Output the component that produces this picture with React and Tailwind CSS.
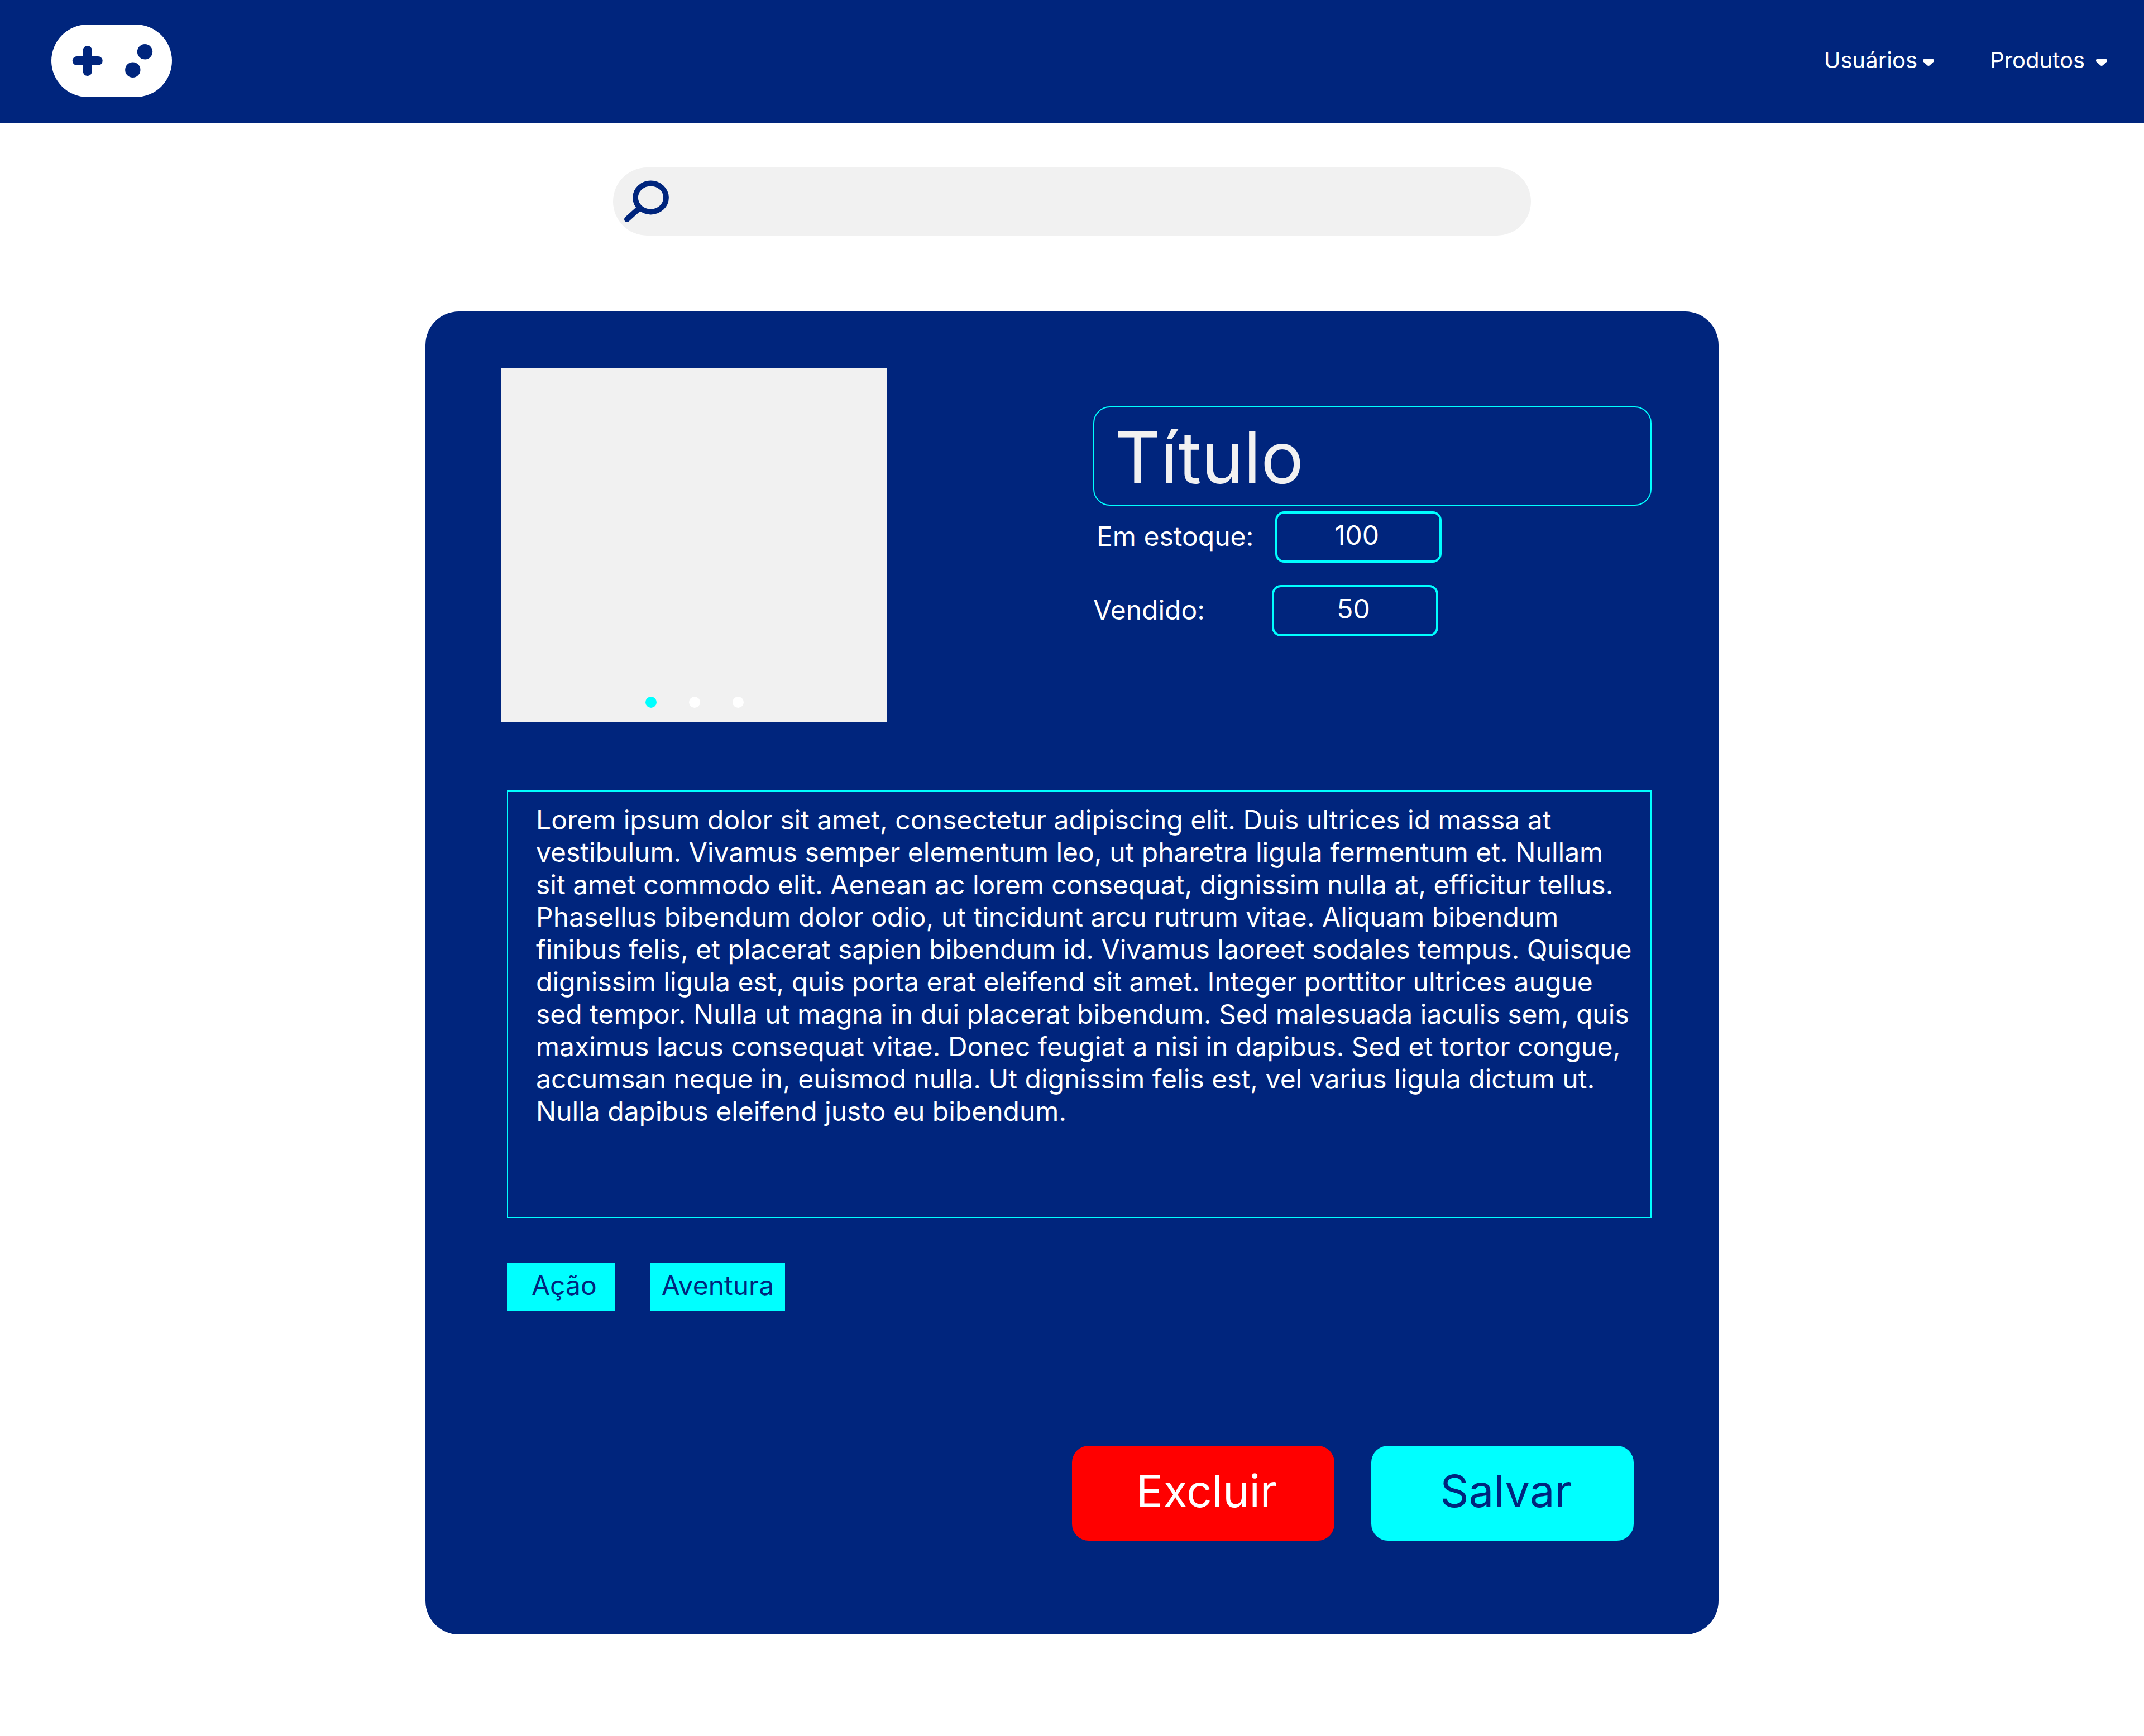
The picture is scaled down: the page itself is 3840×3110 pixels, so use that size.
const description =
  'Lorem ipsum dolor sit amet, consectetur adipiscing elit. Duis ultrices id massa at vestibulum. Vivamus semper elementum leo, ut pharetra ligula fermentum et. Nullam sit amet commodo elit. Aenean ac lorem consequat, dignissim nulla at, efficitur tellus. Phasellus bibendum dolor odio, ut tincidunt arcu rutrum vitae. Aliquam bibendum finibus felis, et placerat sapien bibendum id. Vivamus laoreet sodales tempus. Quisque dignissim ligula est, quis porta erat eleifend sit amet. Integer porttitor ultrices augue sed tempor. Nulla ut magna in dui placerat bibendum. Sed malesuada iaculis sem, quis maximus lacus consequat vitae. Donec feugiat a nisi in dapibus. Sed et tortor congue, accumsan neque in, euismod nulla. Ut dignissim felis est, vel varius ligula dictum ut. Nulla dapibus eleifend justo eu bibendum.';

function Logo() {
  return (
    <svg className="h-[130px] w-[216px]" viewBox="0 0 216 130" aria-hidden="true">
      <rect width="216" height="130" rx="65" fill="#fff" />
      <path d="M64.7 46v38M45.700 65h38" stroke="#00257D" strokeWidth="16" strokeLinecap="round" />
      <circle cx="167.500" cy="48.700" r="13.700" fill="#00257D" />
      <circle cx="145.800" cy="81.300" r="13.700" fill="#00257D" />
    </svg>
  );
}

function Caret() {
  return (
    <svg className="mt-2 h-3 w-5" viewBox="0 0 20 12" aria-hidden="true">
      <path
        d="M1.800 0H18.200C19.200 0 20 .8 20 1.800V3c0 .5-.2 1-.6 1.400L12.400 11c-1.400 1.300-3.400 1.300-4.800 0L.6 4.400C.2 4 0 3.500 0 3V1.800C0 .8.8 0 1.800 0Z"
        fill="#fff"
      />
    </svg>
  );
}

function SearchIcon() {
  return (
    <svg className="h-[76px] w-20 shrink-0" viewBox="0 0 80 76" fill="none" stroke="#00257D" aria-hidden="true">
      <ellipse cx="47.500" cy="31" rx="27.500" ry="25.500" strokeWidth="9.800" />
      <path d="M27.500 49.500L5 69.800" strokeWidth="10" strokeLinecap="round" />
    </svg>
  );
}

function Quantity({ id, label, value, className }) {
  return (
    <div className={`flex items-center ${className}`}>
      <label htmlFor={id} className="w-[320px] pb-0.5">
        {label}
      </label>
      <input
        id={id}
        defaultValue={value}
        inputMode="numeric"
        className="h-[92px] w-[298px] rounded-2xl border-4 border-[#00FFFF] bg-transparent pr-1.5 pb-2 text-center"
      />
    </div>
  );
}

export default function App() {
  return (
    <div className="min-h-screen bg-white font-['Inter',sans-serif] text-[48px] leading-[58px] text-white">
      <header className="flex items-center justify-between bg-[#00257D] pt-11 pr-[66px] pb-[46px] pl-[92px]">
        <a href="#inicio" aria-label="Início">
          <Logo />
        </a>
        <nav className="flex gap-[100px] pb-0.5 text-[40px] leading-[48px]">
          <button type="button" className="flex items-center gap-2.5">
            Usuários
            <Caret />
          </button>
          <button type="button" className="flex items-center gap-5">
            Produtos
            <Caret />
          </button>
        </nav>
      </header>

      <main className="flex flex-col items-center pt-20 pb-[182px]">
        <div className="flex h-[122px] w-full max-w-[1644px] items-center rounded-full bg-[#F1F1F1] pr-10 pl-5">
          <SearchIcon />
          <input
            type="search"
            aria-label="Buscar"
            className="ml-5 h-full min-w-0 flex-1 bg-transparent text-[#00257D] outline-none"
          />
        </div>

        <form className="mt-[136px] w-full max-w-[2316px] rounded-[60px] bg-[#00257D] pt-[102px] pr-[120px] pb-[168px] pl-[136px]">
          <div className="flex justify-between">
            <div className="flex h-[634px] w-[690px] items-end justify-center gap-[58px] bg-[#F1F1F1] pb-[26px] pl-0.5">
              <button type="button" aria-label="Imagem 1" className="size-5 rounded-full bg-[#00FFFF]" />
              <button type="button" aria-label="Imagem 2" className="size-5 rounded-full bg-white" />
              <button type="button" aria-label="Imagem 3" className="size-5 rounded-full bg-white" />
            </div>
            <div className="w-[1000px] pt-[68px]">
              <input
                aria-label="Título"
                defaultValue="Título"
                className="block h-[178px] w-full rounded-[30px] border-2 border-[#00FFFF] bg-transparent pt-1 pl-9 text-[128px] text-[#F1F1F1]"
              />
              <Quantity id="estoque" label="Em estoque:" value="100" className="mt-2.5 ml-1.5" />
              <Quantity id="vendido" label="Vendido:" value="50" className="mt-10" />
            </div>
          </div>

          <div className="mt-[122px] pl-2.5">
            <textarea
              aria-label="Descrição"
              defaultValue={description}
              className="block h-[766px] w-full resize-none overflow-hidden border-2 border-[#00FFFF] bg-transparent pt-[22px] pr-6 pl-[50px]"
            />
            <div className="mt-20 flex gap-16 text-[#00257D]">
              <span className="bg-[#00FFFF] pt-3 pr-8 pb-4 pl-11">Ação</span>
              <span className="bg-[#00FFFF] px-5 pt-3 pb-4">Aventura</span>
            </div>
          </div>

          <div className="mt-[242px] flex justify-end gap-[66px] pr-8 text-[80px]">
            <button type="button" className="h-[170px] w-[470px] rounded-[30px] bg-[#FF0000] pb-2 pl-3">
              Excluir
            </button>
            <button type="submit" className="h-[170px] w-[470px] rounded-[30px] bg-[#00FFFF] pb-2 pl-3 text-[#00257D]">
              Salvar
            </button>
          </div>
        </form>
      </main>
    </div>
  );
}
